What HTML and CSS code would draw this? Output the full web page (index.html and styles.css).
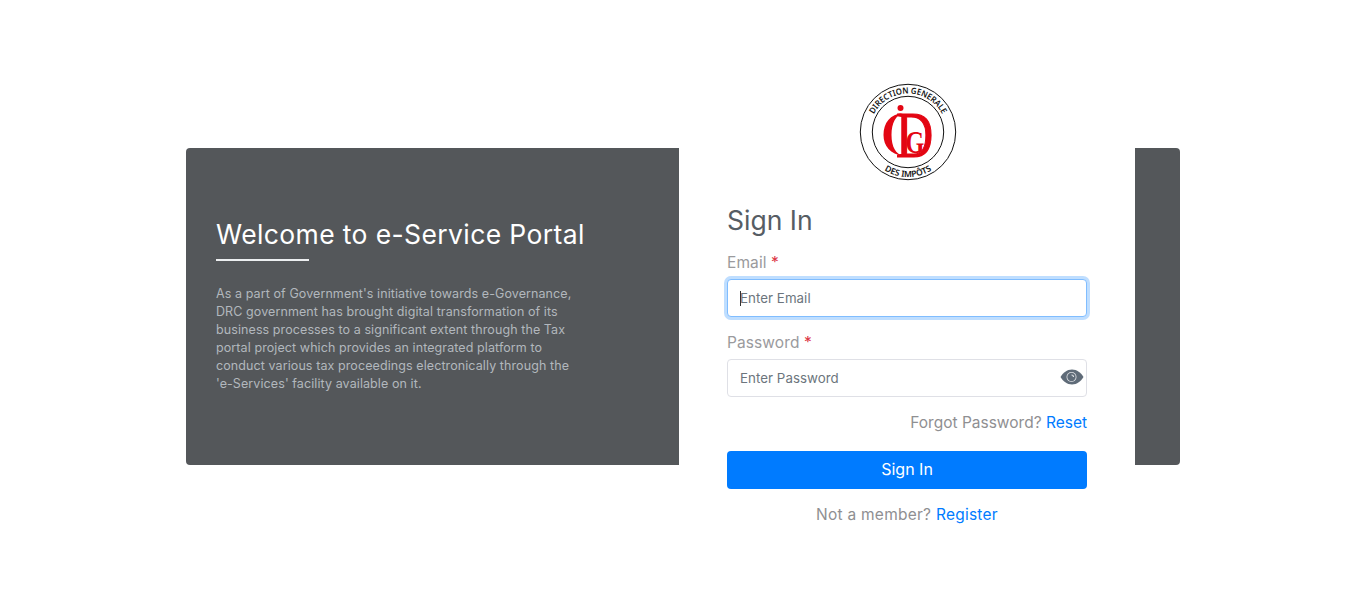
FILE: index.html
```html
<!DOCTYPE html>
<html lang="en">
<head>
<meta charset="utf-8">
<title>e-Service Portal</title>
<link rel="stylesheet" href="styles.css">
</head>
<body>
<main class="page">
  <div class="shell">
    <section class="intro">
      <h2 class="intro-title">Welcome to e-Service Portal</h2>
      <div class="intro-rule"></div>
      <p class="intro-text">As a part of Government's initiative towards e-Governance,<br>DRC government has brought digital transformation of its<br>business processes to a significant extent through the Tax<br>portal project which provides an integrated platform to<br>conduct various tax proceedings electronically through the<br>'e-Services' facility available on it.</p>
    </section>
    <section class="panel">
      <div class="logo-row">
        <svg class="logo" width="98" height="98" viewBox="0 0 98 98" aria-label="Direction Generale des Impôts">
          <defs>
            <path id="arcTop" d="M10.500 49a38.500 38.500 0 0 1 77 0"/>
            <path id="arcBottom" d="M4 49a45 45 0 0 0 90 0"/>
          </defs>
          <circle cx="49" cy="49" r="47.700" fill="#fff" stroke="#111" stroke-width="1"/>
          <circle cx="49" cy="49" r="35.700" fill="none" stroke="#111" stroke-width="1"/>
          <text class="logo-ring"><textPath href="#arcTop" startOffset="50%" text-anchor="middle" textLength="84" lengthAdjust="spacingAndGlyphs">DIRECTION GENERALE</textPath></text>
          <text class="logo-ring"><textPath href="#arcBottom" startOffset="50%" text-anchor="middle" textLength="50" lengthAdjust="spacingAndGlyphs">DES IMPÔTS</textPath></text>
          <path d="M44 30C31 31 24.500 40 24.500 52c0 11 7 19 19.500 21-7-2-11.500-9-11.500-21S37 32 44 30z" fill="#e30613"/>
          <circle cx="41.500" cy="25" r="3" fill="#e30613"/>
          <text class="logo-d" transform="translate(37 74) scale(.78 1)">D</text>
          <text class="logo-g" transform="translate(46.500 70) scale(.78 1)">G</text>
        </svg>
      </div>
      <h1 class="panel-title">Sign In</h1>
      <form class="form">
        <div class="field">
          <label class="label" for="email">Email <span class="req">*</span></label>
          <div class="input-wrap">
            <input class="input input-focus" id="email" type="text" placeholder="Enter Email">
            <span class="caret"></span>
          </div>
        </div>
        <div class="field">
          <label class="label" for="password">Password <span class="req">*</span></label>
          <div class="input-wrap">
            <input class="input" id="password" type="password" placeholder="Enter Password">
            <svg class="eye" width="24" height="16" viewBox="0 0 24 16">
              <path d="M12 .5c5 0 9 3.300 11.500 7.500-2.500 4.200-6.500 7.500-11.500 7.500S3 12.200.5 8C3 3.800 7 .5 12 .5z" fill="#5f6b78"/>
              <circle cx="11.500" cy="8" r="5" fill="#dfe2e5"/>
              <circle cx="11.500" cy="8" r="4.200" fill="#5f6b78"/>
              <path d="M11.500 5.400a2.600 2.600 0 0 1 2.600 2.600h-1.200a1.400 1.400 0 0 0-1.400-1.400z" fill="#dfe2e5"/>
            </svg>
          </div>
        </div>
        <p class="forgot">Forgot Password? <a class="link" href="#">Reset</a></p>
        <button class="submit" type="button">Sign In</button>
        <p class="member">Not a member? <a class="link" href="#">Register</a></p>
      </form>
    </section>
  </div>
</main>
</body>
</html>
```

FILE: styles.css
```css
* { box-sizing: border-box; }
html, body { margin: 0; height: 100%; overflow: hidden; background: #fff; }
body { font-family: Inter, "Noto Sans", "Liberation Sans", sans-serif; color: #6c757d; }

.page { padding: 148px 186px 0; }

.shell {
  display: flex;
  align-items: center;
  width: 994px;
  height: 317px;
  background: #54575a;
  border-radius: 4px;
}

.intro { width: 493px; padding: 0 30px 3px; flex: none; }
.intro-title {
  margin: 0;
  font-size: 26.500px;
  line-height: 34px;
  font-weight: 400;
  letter-spacing: .38px;
  color: #fff;
}
.intro-rule { width: 93px; height: 2px; margin-top: 8px; background: #eceef0; }
.intro-text {
  margin: 24px 0 0;
  font-size: 12.500px;
  line-height: 18px;
  letter-spacing: .09px;
  color: #b2b7bd;
}

.panel {
  width: 456px;
  height: 445px;
  flex: none;
  padding: 0 48px;
  background: #fff;
}
.logo-row { display: flex; justify-content: center; }
.logo { display: block; margin: -1px 0 0 2px; }
.logo-ring { font: 600 8.500px "Noto Sans", "Liberation Sans", sans-serif; fill: #111; }
.logo-d { font: 400 66px "Liberation Serif", serif; fill: #e30613; stroke: #e30613; stroke-width: 1.200px; }
.logo-g { font: 700 31px "Liberation Serif", serif; fill: #e30613; }

.panel-title {
  margin: 19px 0 0;
  font-size: 26.500px;
  line-height: 40px;
  font-weight: 400;
  color: #565d64;
}
.form { margin: 0; }
.field { margin-top: 12px; margin-bottom: 15px; }
.field + .field { margin-top: 3px; }
.label { display: block; font-size: 15.500px; line-height: 22px; margin-bottom: 5px; letter-spacing: .1px; color: #9a9a9d; }
.req { color: #dc3545; }
.input-wrap { position: relative; }
.input {
  display: block;
  width: 100%;
  height: 38px;
  padding: 0 12px;
  border: 1px solid #dfe0e6;
  border-radius: 4px;
  background: #fff;
  font: 400 13.300px Inter, "Noto Sans", sans-serif;
  letter-spacing: .05px;
  color: #495057;
  outline: none;
}
.input::placeholder { color: #6c757d; opacity: 1; }
.input-focus { border-color: #80bdff; box-shadow: 0 0 0 3px rgba(0, 123, 255, .25); }
.caret { position: absolute; left: 13px; top: 12px; width: 1px; height: 15px; background: #333; }
.eye { position: absolute; right: 3px; top: 10px; }

.forgot { margin: 14px 0 0; text-align: right; font-size: 15.500px; line-height: 22px; color: #8f8f92; }
.link { color: #007bff; text-decoration: none; }
.submit {
  display: block;
  width: 100%;
  height: 38px;
  margin-top: 17px;
  padding: 0 0 2px;
  border: 0;
  border-radius: 4px;
  background: #007bff;
  color: #fff;
  font: 400 16px Inter, "Noto Sans", sans-serif;
}
.member { margin: 15px 0 0; text-align: center; font-size: 15.500px; line-height: 22px; letter-spacing: .25px; color: #8f8f92; }
```
